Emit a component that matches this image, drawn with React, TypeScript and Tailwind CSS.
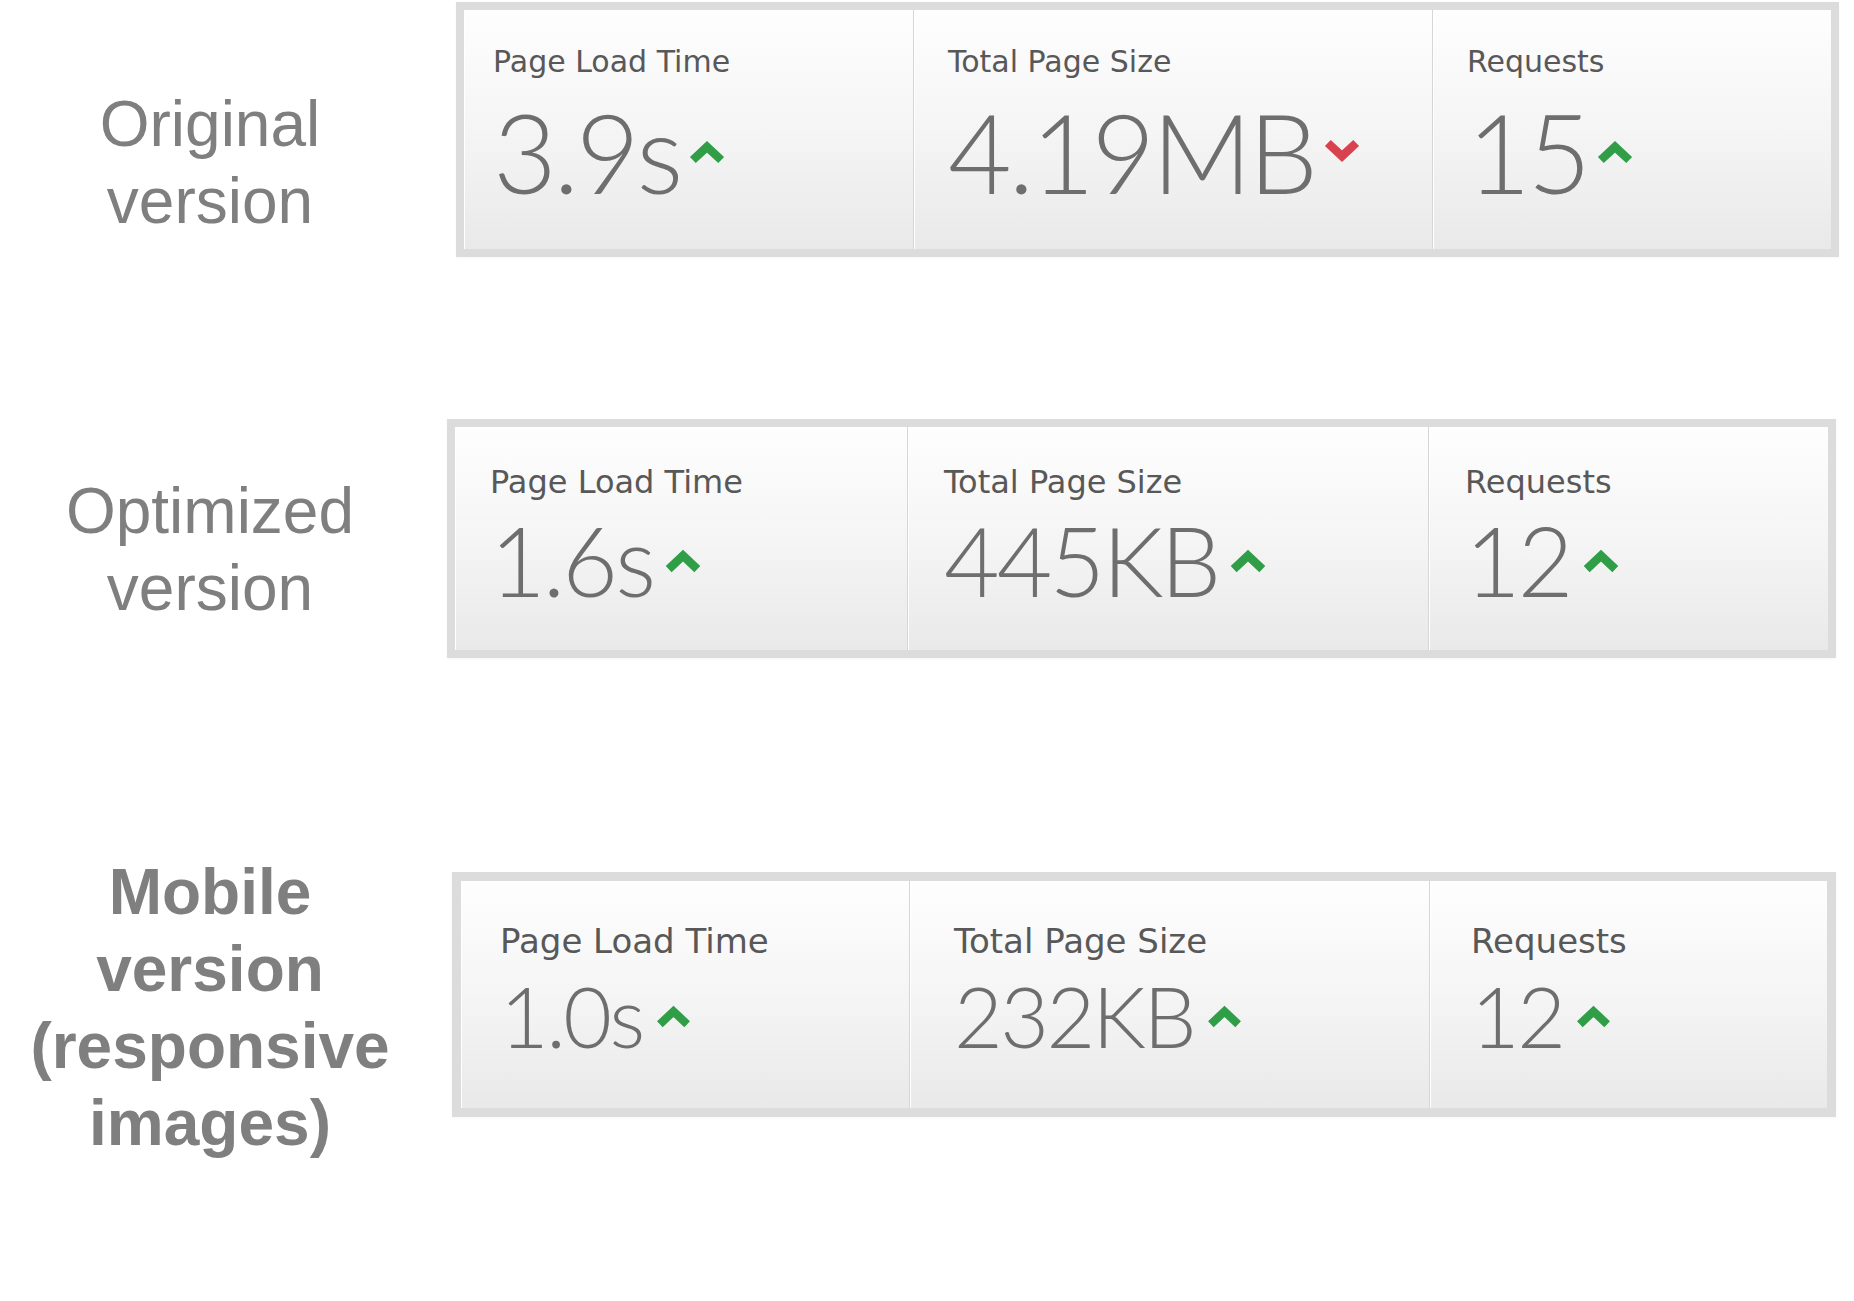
import React from 'react';

type Cell = {
  label: string;
  value: string;
  dir: 'up' | 'down';
  col: string;
};

type Row = {
  title: string[];
  bold: boolean;
  rowClass: string;
  titleClass: string;
  boxClass: string;
  labelClass: string;
  valueClass: string;
  chevronClass: string;
  cells: Cell[];
};

function Chevron({ dir, className }: { dir: 'up' | 'down'; className: string }) {
  return (
    <svg viewBox="0 0 36 22" className={`overflow-visible ${className}`} aria-hidden="true">
      {dir === 'up' ? (
        <polyline points="3,20 18,6 33,20" fill="none" stroke="#2f9e46" strokeWidth="9" />
      ) : (
        <polyline points="3,2 18,16 33,2" fill="none" stroke="#d8424f" strokeWidth="9" />
      )}
    </svg>
  );
}

const rows: Row[] = [
  {
    title: ['Original', 'version'],
    bold: false,
    rowClass: 'mt-[2px]',
    titleClass: 'mt-[84px]',
    boxClass: 'ml-[36px] w-[1383px] h-[255px] border-[8px]',
    labelClass: 'pt-[37px] text-[30px]',
    valueClass: 'mt-[19px] text-[110px]',
    chevronClass: 'w-[34px] h-[21px] ml-[10px]',
    cells: [
      { label: 'Page Load Time', value: '3.9s', dir: 'up', col: 'w-[449px] pl-[29px]' },
      { label: 'Total Page Size', value: '4.19MB', dir: 'down', col: 'w-[519px] pl-[34px] border-l border-[#d6d6d6]' },
      { label: 'Requests', value: '15', dir: 'up', col: 'flex-1 pl-[34px] border-l border-[#d6d6d6]' },
    ],
  },
  {
    title: ['Optimized', 'version'],
    bold: false,
    rowClass: 'mt-[162px]',
    titleClass: 'mt-[54px]',
    boxClass: 'ml-[27px] w-[1389px] h-[239px] border-[8px]',
    labelClass: 'pt-[39px] text-[32px]',
    valueClass: 'mt-[14px] text-[96px]',
    chevronClass: 'w-[36px] h-[21px] ml-[12px]',
    cells: [
      { label: 'Page Load Time', value: '1.6s', dir: 'up', col: 'w-[452px] pl-[35px]' },
      { label: 'Total Page Size', value: '445KB', dir: 'up', col: 'w-[521px] pl-[36px] border-l border-[#d6d6d6]' },
      { label: 'Requests', value: '12', dir: 'up', col: 'flex-1 pl-[36px] border-l border-[#d6d6d6]' },
    ],
  },
  {
    title: ['Mobile', 'version', '(responsive', 'images)'],
    bold: true,
    rowClass: 'mt-[196px]',
    titleClass: 'mt-0',
    boxClass: 'ml-[32px] mt-[18px] w-[1384px] h-[245px] border-[9px]',
    labelClass: 'pt-[43px] text-[34px]',
    valueClass: 'mt-[16px] text-[84px]',
    chevronClass: 'w-[33px] h-[20px] ml-[14px]',
    cells: [
      { label: 'Page Load Time', value: '1.0s', dir: 'up', col: 'w-[448px] pl-[39px]' },
      { label: 'Total Page Size', value: '232KB', dir: 'up', col: 'w-[520px] pl-[44px] border-l border-[#d6d6d6]' },
      { label: 'Requests', value: '12', dir: 'up', col: 'flex-1 pl-[41px] border-l border-[#d6d6d6]' },
    ],
  },
];

export default function App() {
  return (
    <div className="w-[1854px] h-[1301px] bg-white overflow-hidden">
      {rows.map((row) => (
        <div key={row.title.join(' ')} className={`flex items-start ${row.rowClass}`}>
          {/* Row title */}
          <div
            className={`w-[420px] shrink-0 text-center font-['Liberation_Sans',Arial,sans-serif] text-[64px] leading-[77px] text-[#7f7f7f] ${
              row.bold ? 'font-bold' : 'font-normal'
            } ${row.titleClass}`}
          >
            {row.title.map((line) => (
              <div key={line}>{line}</div>
            ))}
          </div>

          {/* Metrics panel */}
          <div
            className={`shrink-0 flex border-[#dcdcdc] bg-gradient-to-b from-[#fefefe] via-[#f5f5f5] to-[#e9e9e9] shadow-[0_1px_3px_rgba(0,0,0,0.04)] ${row.boxClass}`}
          >
            {row.cells.map((cell) => (
              <div key={cell.label} className={`h-full shadow-[inset_1px_0_0_#ffffff] ${cell.col}`}>
                <div
                  className={`font-['DejaVu_Sans',sans-serif] leading-none text-[#585858] whitespace-nowrap ${row.labelClass}`}
                >
                  {cell.label}
                </div>
                <div className={`flex items-center ${row.valueClass}`}>
                  <span className="font-['Lato','Open_Sans',sans-serif] font-light leading-none tracking-[-0.03em] text-[#6e6e6e]">
                    {cell.value}
                  </span>
                  <Chevron dir={cell.dir} className={row.chevronClass} />
                </div>
              </div>
            ))}
          </div>
        </div>
      ))}
    </div>
  );
}
